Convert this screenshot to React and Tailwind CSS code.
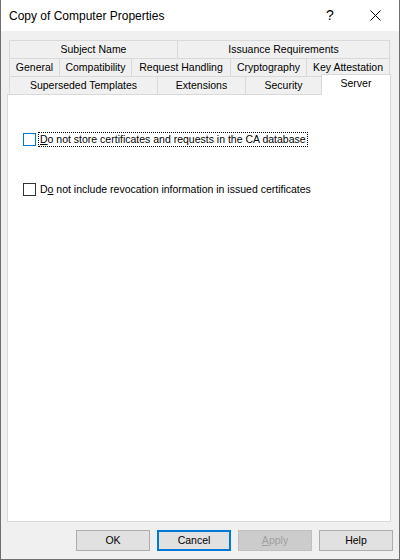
import React from "react";

const row1 = [
  { label: "Subject Name", w: "w-[168px]" },
  { label: "Issuance Requirements", w: "flex-1" },
];
const row2 = [
  { label: "General", w: "w-[50px]" },
  { label: "Compatibility", w: "w-[72px]" },
  { label: "Request Handling", w: "w-[99px]" },
  { label: "Cryptography", w: "w-[76px]" },
  { label: "Key Attestation", w: "flex-1" },
];
const row3 = [
  { label: "Superseded Templates", w: "w-[148px]" },
  { label: "Extensions", w: "w-[88px]" },
  { label: "Security", w: "w-[76px]" },
];

function Tab({ label, w, last }) {
  return (
    <div
      className={`${w} h-[18px] flex items-center justify-center border-t border-l border-[#d9d9d9] bg-[#f0f0f0] text-[10.5px] leading-none text-black ${
        last ? "border-r" : ""
      }`}
    >
      {label}
    </div>
  );
}

function Check({ focused, children }) {
  return (
    <div className="flex items-center gap-[2px]">
      <span
        className={`w-[13px] h-[13px] border ${focused ? "border-[#0078d7]" : "border-[#333333]"} bg-white shrink-0`}
      />
      <span
        className={`pl-[1px] pr-[1px] border border-dotted text-[10.5px] leading-[13px] text-black ${
          focused ? "border-black" : "border-transparent"
        }`}
      >
        {children}
      </span>
    </div>
  );
}

function Btn({ children, variant }) {
  const cls =
    variant === "default"
      ? "border-2 border-[#0078d7] bg-[#e1e1e1] text-black"
      : variant === "disabled"
      ? "border border-[#bfbfbf] bg-[#cccccc] text-[#a0a0a0]"
      : "border border-[#adadad] bg-[#e1e1e1] text-black";
  return (
    <div className={`w-[74px] h-[21px] flex items-center justify-center text-[10.5px] leading-none ${cls}`}>
      {children}
    </div>
  );
}

export default function App() {
  return (
    <div
      className="w-[400px] h-[560px] flex flex-col bg-[#f0f0f0] border-l border-r border-b border-[#6e6e6e]"
      style={{ fontFamily: '"Liberation Sans", Arial, sans-serif' }}
    >
      <div className="h-[31px] bg-white flex items-center shrink-0">
        <span className="pl-[8px] text-[12px] text-black flex-1">Copy of Computer Properties</span>
        <span className="w-[46px] text-center text-[14px] text-black">?</span>
        <span className="w-[46px] flex justify-center pr-[1px]">
          <svg width="11" height="11" viewBox="0 0 11 11">
            <path d="M0.5 0.5 L10.5 10.5 M10.5 0.5 L0.5 10.5" stroke="#000" strokeWidth="1" />
          </svg>
        </span>
      </div>

      <div className="pt-[9px] pl-[6px] pr-[8px] flex flex-col">
        <div className="pl-[2px] pr-[1px] flex flex-col">
          <div className="flex h-[18px]">
            {row1.map((t, i) => (
              <Tab key={t.label} {...t} last={i === row1.length - 1} />
            ))}
          </div>
          <div className="flex h-[18px]">
            {row2.map((t, i) => (
              <Tab key={t.label} {...t} last={i === row2.length - 1} />
            ))}
          </div>
          <div className="flex h-[18px]">
            {row3.map((t) => (
              <Tab key={t.label} {...t} />
            ))}
            <div className="flex-1 -mt-[2px] -mr-[1px] h-[21px] pb-[3px] bg-white border-t border-l border-r border-[#d9d9d9] flex items-center justify-center text-[10.5px] leading-none text-black relative z-10">
              Server
            </div>
          </div>
        </div>
        <div className="h-[428px] bg-white border border-[#d9d9d9] pt-[37px] pl-[15px] flex flex-col gap-[35px]">
          <Check focused>
            <span className="underline">D</span>o not store certificates and requests in the CA database
          </Check>
          <Check>
            D<span className="underline">o</span> not include revocation information in issued certificates
          </Check>
        </div>
      </div>

      <div className="flex justify-end gap-[7px] pr-[6px] mt-[8px]">
        <Btn>OK</Btn>
        <Btn variant="default">Cancel</Btn>
        <Btn variant="disabled">
          <span className="underline">A</span>pply
        </Btn>
        <Btn>Help</Btn>
      </div>
    </div>
  );
}
